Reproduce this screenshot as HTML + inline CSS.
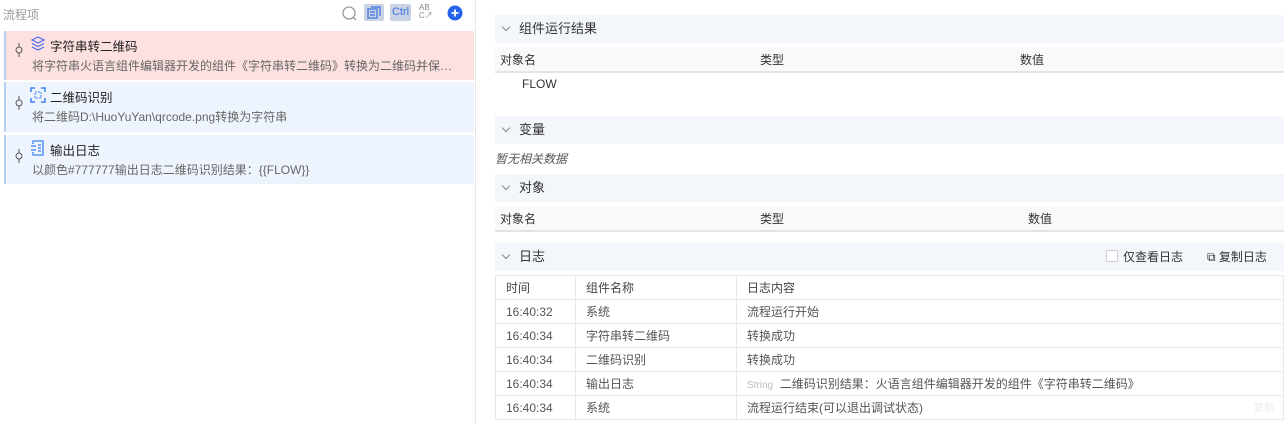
<!DOCTYPE html>
<html><head><meta charset="utf-8"><style>
*{margin:0;padding:0;box-sizing:border-box}
body{width:1288px;height:424px;background:#fff;font-family:"Liberation Sans","Noto Sans CJK SC",sans-serif;font-size:12px;color:#333;position:relative;overflow:hidden}
.abs{position:absolute}
.left{left:0;top:0;width:476px;height:424px;border-right:1px solid #e8e8e8}
.card{position:absolute;left:4px;width:470px;border-left:2px solid #b8d0f0}
.card .t{position:absolute;left:44px;top:5px;font-size:12.5px;color:#222}
.card .d{position:absolute;left:26px;top:26px;font-size:12px;color:#666;white-space:nowrap;width:424px;overflow:hidden;text-overflow:ellipsis}
.card .ic{position:absolute;left:24px;top:5px}
.card .pin{position:absolute;left:8px;top:12px}
.bar{position:absolute;left:495px;width:789px;height:28px;background:#f3f6fa;font-size:13px;color:#333;line-height:28px;padding-left:24px}
.bar:before{content:"";position:absolute;left:8px;top:9px;width:5px;height:5px;border-right:1px solid #888;border-bottom:1px solid #888;transform:rotate(45deg)}
.th{position:absolute;left:495px;width:789px;height:26px;background:#f8f9fa;border-bottom:2px solid #e2e4e6;font-size:12px;line-height:26px}
.th span{position:absolute;top:0}
table{position:absolute;left:495px;top:275px;width:789px;border-collapse:collapse;font-size:12px;color:#555}
td{border:1px solid #e6e8eb;height:24px;padding-left:10px;white-space:nowrap}
tr:first-child td{color:#444}
</style></head><body>
<div class="abs left">
 <div class="abs" style="left:3px;top:6px;font-size:12px;color:#999">流程项</div>
 <svg class="abs" style="left:341px;top:5px" width="16" height="16"><circle cx="8" cy="8" r="6" fill="none" stroke="#999" stroke-width="1.3"/><path d="M12 12l3 3" stroke="#999" stroke-width="1.3"/></svg>
 <div class="abs" style="left:364px;top:4px;width:20px;height:17px;background:#c9d3e3;border-radius:2px"></div>
 <svg class="abs" style="left:367px;top:6px" width="14" height="13"><rect x="1" y="3" width="9" height="9" fill="none" stroke="#3b6fe0" stroke-width="1.2"/><path d="M4 1h9v9M3 6h5M3 9h5" stroke="#3b6fe0" stroke-width="1.2" fill="none"/></svg>
 <div class="abs" style="left:390px;top:4px;width:21px;height:17px;background:#c9d3e3;border-radius:2px;color:#3b6fe0;font-size:11px;line-height:17px;text-align:center">Ctrl</div>
 <div class="abs" style="left:419px;top:4px;font-size:8px;color:#888;line-height:8px">AB<br>C↗</div>
 <svg class="abs" style="left:447px;top:5px" width="16" height="16"><circle cx="8" cy="8" r="7.5" fill="#2563eb"/><path d="M8 4.5v7M4.5 8h7" stroke="#fff" stroke-width="1.8"/></svg>

 <div class="card" style="top:31px;height:49px;background:#fde0e0">
  <svg class="pin" width="10" height="14"><path d="M5 0v4M5 10v4" stroke="#555"/><circle cx="5" cy="7" r="3" fill="none" stroke="#555"/></svg>
  <svg class="ic" width="16" height="16"><path d="M8 1l6 3-6 3-6-3z M2 7.5l6 3 6-3 M2 11l6 3 6-3" fill="none" stroke="#4b6cf0" stroke-width="1.2"/></svg>
  <div class="t">字符串转二维码</div>
  <div class="d">将字符串火语言组件编辑器开发的组件《字符串转二维码》转换为二维码并保存到文件</div>
 </div>
 <div class="card" style="top:82px;height:50px;background:#eef4fd">
  <svg class="pin" width="10" height="14" style="top:14px"><path d="M5 0v4M5 10v4" stroke="#555"/><circle cx="5" cy="7" r="3" fill="none" stroke="#555"/></svg>
  <svg class="ic" width="16" height="16"><path d="M1 5V1h4M11 1h4v4M15 11v4h-4M5 15H1v-4" fill="none" stroke="#3b82f6" stroke-width="1.5"/><rect x="5" y="5" width="6" height="6" fill="none" stroke="#3b82f6" stroke-dasharray="2 1"/></svg>
  <div class="t">二维码识别</div>
  <div class="d">将二维码D:\HuoYuYan\qrcode.png转换为字符串</div>
 </div>
 <div class="card" style="top:135px;height:49px;background:#eef4fd">
  <svg class="pin" width="10" height="14" style="top:14px"><path d="M5 0v4M5 10v4" stroke="#555"/><circle cx="5" cy="7" r="3" fill="none" stroke="#555"/></svg>
  <svg class="ic" width="16" height="16"><path d="M3 4V1h10v14H3v-3M1 6h5M1 10h5M8 5h3M8 8h3M8 11h3" fill="none" stroke="#3b82f6" stroke-width="1.3"/></svg>
  <div class="t">输出日志</div>
  <div class="d">以颜色#777777输出日志二维码识别结果：{{FLOW}}</div>
 </div>
</div>

<div class="bar" style="top:15px">组件运行结果</div>
<div class="th" style="top:47px"><span style="left:5px">对象名</span><span style="left:265px">类型</span><span style="left:525px">数值</span></div>
<div class="abs" style="left:522px;top:77px;font-size:12px;color:#333">FLOW</div>
<div class="bar" style="top:116px">变量</div>
<div class="abs" style="left:495px;top:150px;font-size:12px;color:#555;font-style:italic">暂无相关数据</div>
<div class="bar" style="top:174px">对象</div>
<div class="th" style="top:206px"><span style="left:5px">对象名</span><span style="left:265px">类型</span><span style="left:533px">数值</span></div>
<div class="bar" style="top:243px">日志
 <span class="abs" style="left:611px;top:7px;width:12px;height:12px;border:1px solid #ccc;border-radius:2px;background:#fff"></span>
 <span class="abs" style="left:628px;top:0;font-size:12px">仅查看日志</span>
 <span class="abs" style="left:712px;top:0;font-size:12px">⧉ 复制日志</span>
</div>
<table>
<tr><td style="width:80px">时间</td><td style="width:161px">组件名称</td><td>日志内容</td></tr>
<tr><td>16:40:32</td><td>系统</td><td>流程运行开始</td></tr>
<tr><td>16:40:34</td><td>字符串转二维码</td><td>转换成功</td></tr>
<tr><td>16:40:34</td><td>二维码识别</td><td>转换成功</td></tr>
<tr><td>16:40:34</td><td>输出日志</td><td><span style="color:#bbb;font-size:10px">String</span>&nbsp; 二维码识别结果：火语言组件编辑器开发的组件《字符串转二维码》</td></tr>
<tr><td>16:40:34</td><td>系统</td><td>流程运行结束(可以退出调试状态)<span style="float:right;margin-right:8px;color:#eee;font-size:11px">复制</span></td></tr>
</table>
</body></html>
